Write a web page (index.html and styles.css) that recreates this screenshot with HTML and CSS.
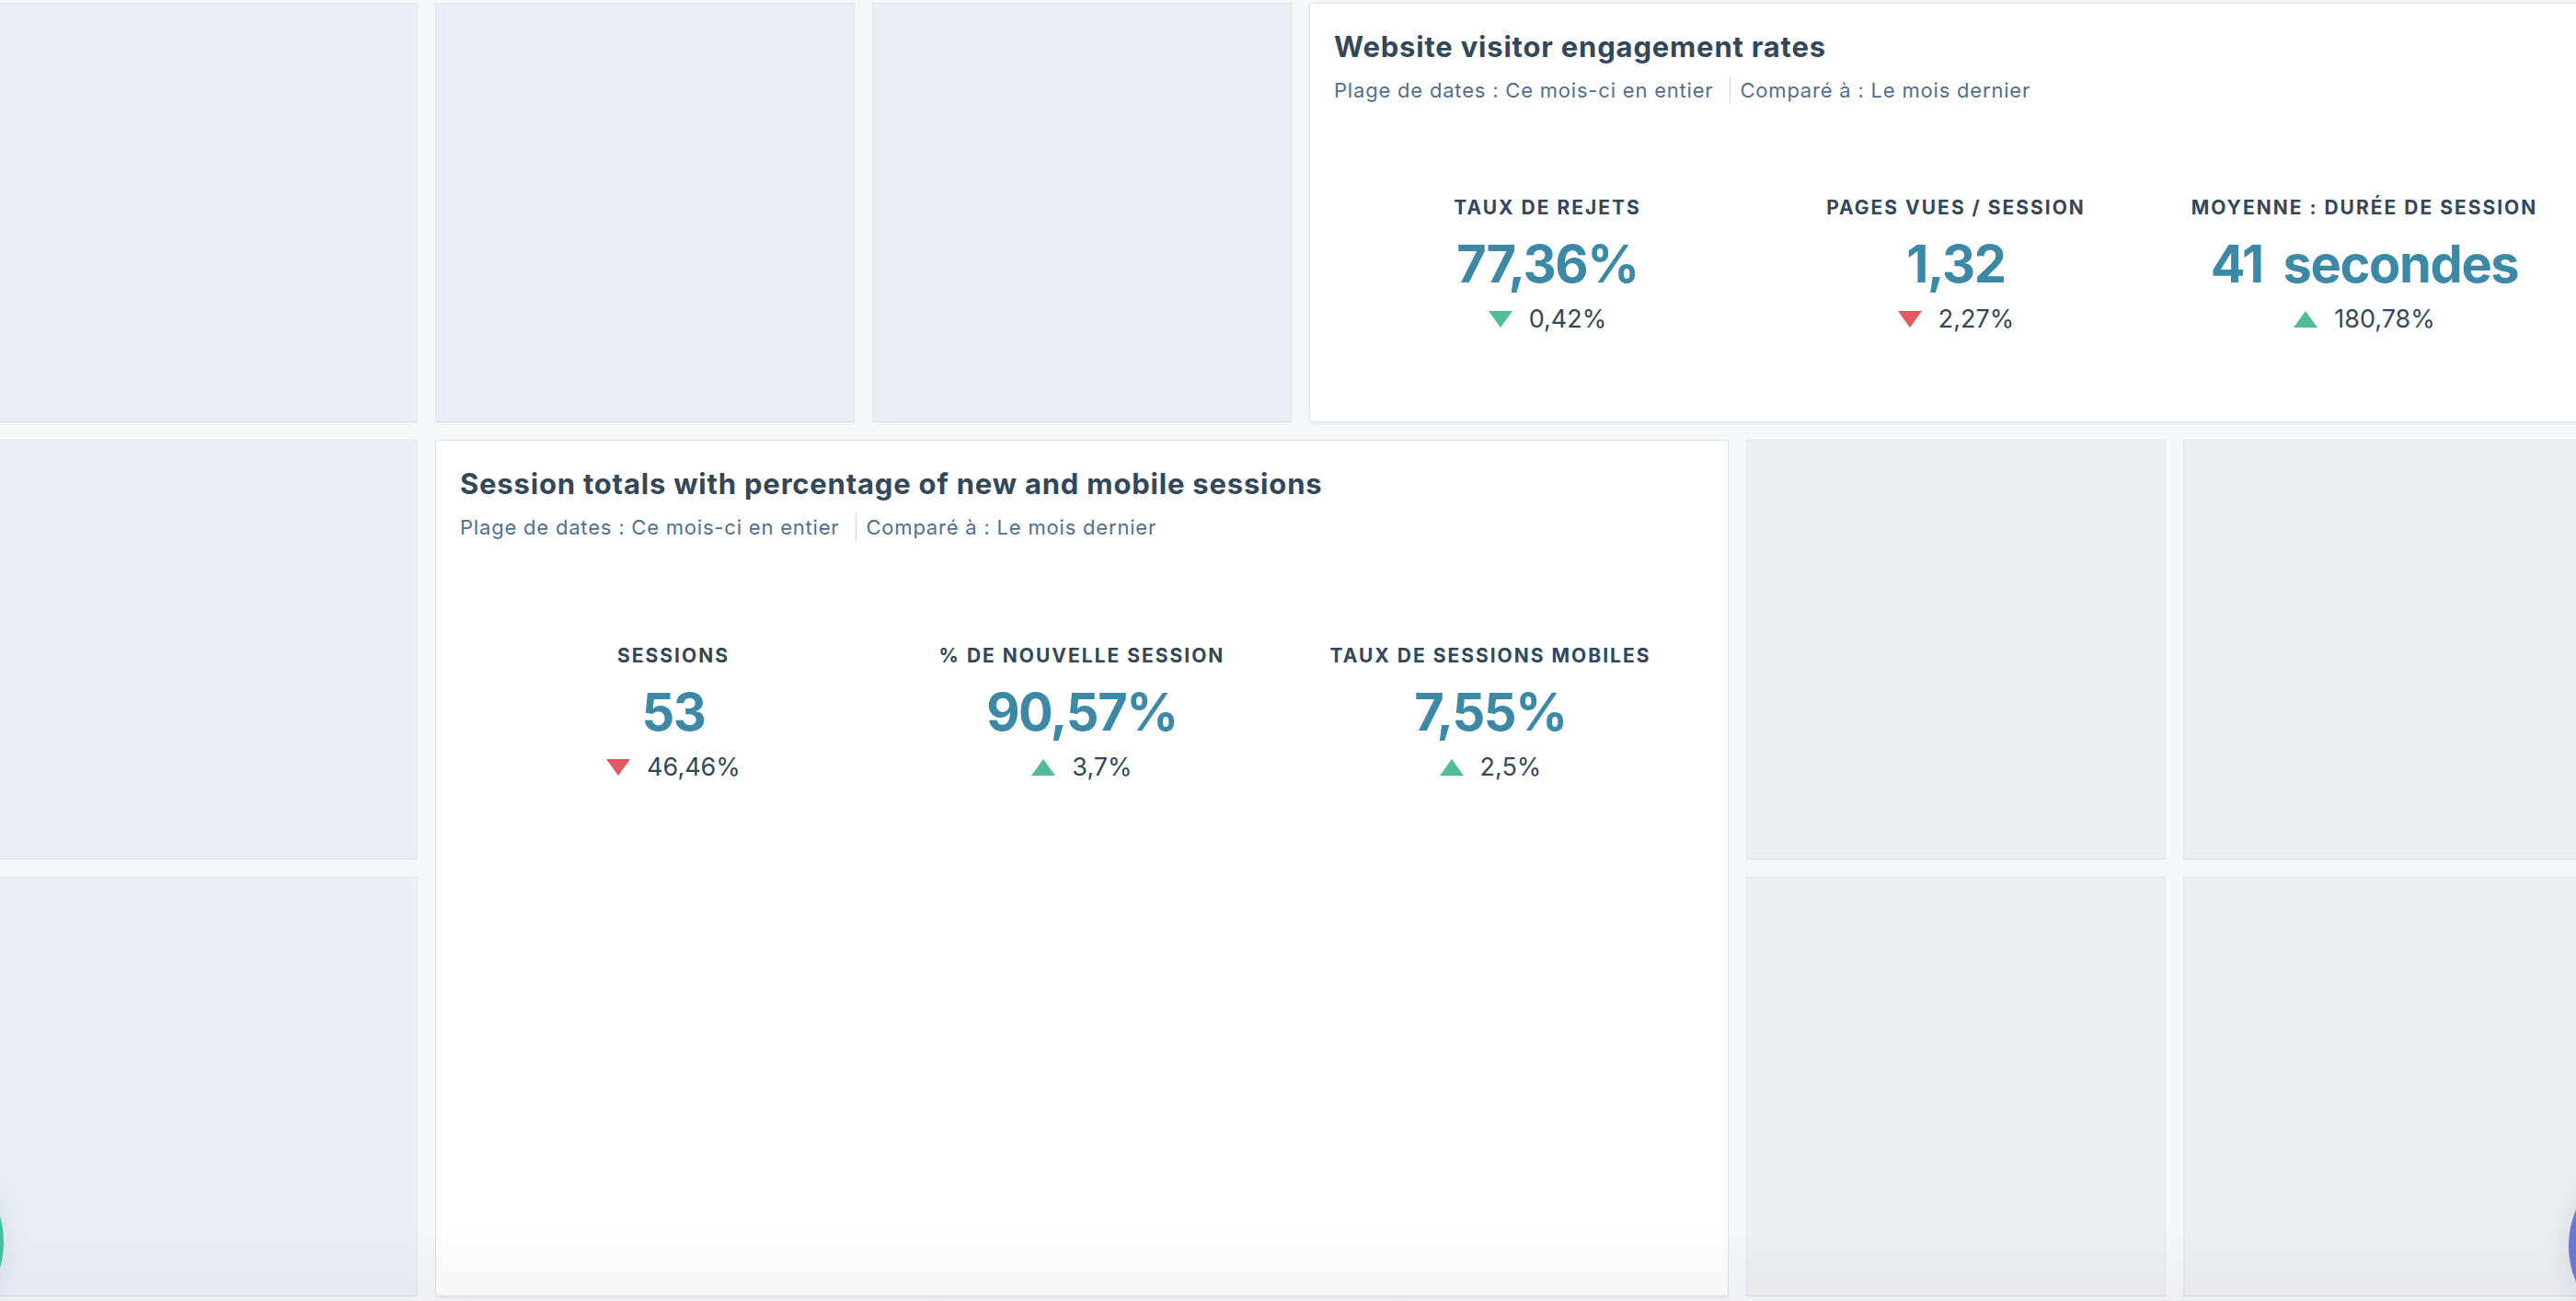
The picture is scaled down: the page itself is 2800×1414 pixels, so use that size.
FILE: index.html
```html
<!DOCTYPE html>
<html>
    <head>
        <meta charset="utf-8">
        <title>Tableau de bord</title>
        <link rel="stylesheet" href="styles.css">
    </head>
    <body>
        <div class="board">
            <div class="tile"></div>
            <div class="tile"></div>
            <div class="tile"></div>

            <div class="card card-wide">
                <div class="card-title">Website visitor engagement rates</div>
                <div class="card-meta">
                    <span class="meta-range">Plage de dates : Ce mois-ci en entier</span>
                    <span class="meta-compare">Comparé à : Le mois dernier</span>
                </div>
                <div class="metrics">
                    <div class="metric">
                        <div class="metric-label">TAUX DE REJETS</div>
                        <div class="metric-value">77,36%</div>
                        <div class="metric-change"><span class="arrow arrow-down good"></span>0,42%</div>
                    </div>
                    <div class="metric">
                        <div class="metric-label">PAGES VUES / SESSION</div>
                        <div class="metric-value">1,32</div>
                        <div class="metric-change"><span class="arrow arrow-down bad"></span>2,27%</div>
                    </div>
                    <div class="metric">
                        <div class="metric-label">MOYENNE : DURÉE DE SESSION</div>
                        <div class="metric-value">41 secondes</div>
                        <div class="metric-change"><span class="arrow arrow-up good"></span>180,78%</div>
                    </div>
                </div>
            </div>

            <div class="tile"></div>

            <div class="card card-tall">
                <div class="card-title">Session totals with percentage of new and mobile sessions</div>
                <div class="card-meta">
                    <span class="meta-range">Plage de dates : Ce mois-ci en entier</span>
                    <span class="meta-compare">Comparé à : Le mois dernier</span>
                </div>
                <div class="metrics metrics-low">
                    <div class="metric">
                        <div class="metric-label">SESSIONS</div>
                        <div class="metric-value">53</div>
                        <div class="metric-change"><span class="arrow arrow-down bad"></span>46,46%</div>
                    </div>
                    <div class="metric">
                        <div class="metric-label">% DE NOUVELLE SESSION</div>
                        <div class="metric-value">90,57%</div>
                        <div class="metric-change"><span class="arrow arrow-up good"></span>3,7%</div>
                    </div>
                    <div class="metric">
                        <div class="metric-label">TAUX DE SESSIONS MOBILES</div>
                        <div class="metric-value">7,55%</div>
                        <div class="metric-change"><span class="arrow arrow-up good"></span>2,5%</div>
                    </div>
                </div>
            </div>

            <div class="tile tile-grey"></div>
            <div class="tile tile-grey"></div>
            <div class="tile"></div>
            <div class="tile tile-grey"></div>
            <div class="tile tile-grey"></div>
        </div>

        <div class="bottom-fade"></div>
        <div class="bubble bubble-left"></div>
        <div class="bubble bubble-right"></div>
    </body>
</html>
```

FILE: styles.css
```css
body{
    margin: 0;
    height: 1414px;
    overflow: hidden;
    background-color: #f5f8fa;
    font-family: "Inter", "Liberation Sans", sans-serif;
    color: #33475b;
    position: relative;
}

.board{
    display: grid;
    grid-template-columns: repeat(6, 456px);
    grid-auto-rows: 456px;
    gap: 19px;
    margin: 3px 0 0 -2px;
}

.tile{
    background-color: #eaeff7;
    border: 1px solid #e0e5ee;
    border-bottom-color: #d6dce6;
    box-sizing: border-box;
}

.tile-grey{
    background-color: #eceff3;
}

.card{
    background-color: #fff;
    border: 1px solid #dfe3eb;
    border-radius: 4px;
    box-shadow: 0 1px 3px rgba(45, 62, 80, 0.08);
    box-sizing: border-box;
    padding: 29px 26px 0 26px;
}

.card-wide{
    grid-column: span 3;
}

.card-tall{
    grid-column: span 3;
    grid-row: span 2;
}

.card-title{
    font-size: 31px;
    line-height: 36px;
    font-weight: 700;
    letter-spacing: 0.8px;
    color: #33475b;
}

.card-meta{
    margin-top: 14px;
    font-size: 22px;
    line-height: 30px;
    letter-spacing: 0.8px;
    color: #516f90;
    display: flex;
}

.meta-range{
    margin-right: 18px;
}

.meta-compare{
    border-left: 1px solid #cbd6e2;
    padding-left: 10px;
}

.metrics{
    display: flex;
    margin: 100px 10px 0 10px;
}

.metrics-low{
    margin-top: 112px;
}

.metric{
    flex: 1;
    text-align: center;
}

.metric-label{
    font-size: 21px;
    line-height: 26px;
    font-weight: 700;
    letter-spacing: 2px;
}

.metric-value{
    margin-top: 16px;
    font-size: 56px;
    line-height: 64px;
    font-weight: 700;
    color: #3b89a7;
    letter-spacing: -1.4px;
    word-spacing: 10px;
}

.metric-change{
    margin-top: 12px;
    font-size: 27px;
    line-height: 32px;
    display: flex;
    justify-content: center;
    align-items: center;
}

.arrow{
    width: 0;
    height: 0;
    border-left: 13px solid transparent;
    border-right: 13px solid transparent;
    margin-right: 18px;
}

.arrow-down.good{
    border-top: 18px solid #51bb9c;
}

.arrow-down.bad{
    border-top: 18px solid #e05a5f;
}

.arrow-up.good{
    border-bottom: 18px solid #51bb9c;
}

.bottom-fade{
    position: absolute;
    left: 0;
    right: 0;
    bottom: 0;
    height: 80px;
    background: linear-gradient(rgba(200, 200, 215, 0), rgba(200, 200, 215, 0.18));
    pointer-events: none;
}

.bubble{
    position: absolute;
    width: 200px;
    height: 200px;
    border-radius: 50%;
    box-shadow: 0 0 30px rgba(45, 62, 80, 0.12);
}

.bubble-left{
    left: -196px;
    top: 1250px;
    background-color: #3fbf9b;
}

.bubble-right{
    right: -192px;
    top: 1254px;
    background-color: #6a78d1;
}
```
